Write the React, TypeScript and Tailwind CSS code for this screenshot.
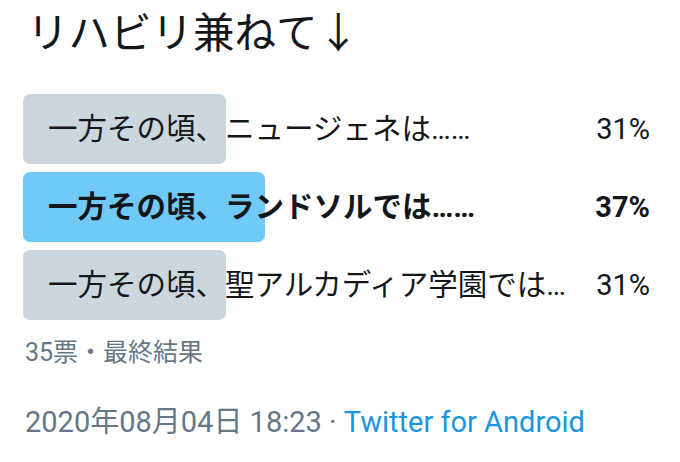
import React from "react";

const font = { fontFamily: 'Roboto, "Noto Sans CJK JP", "Noto Sans", sans-serif' };

function Row({ label, pct, width, win }: { label: string; pct: string; width: number; win?: boolean }) {
  return (
    <div className="relative flex h-[70px] w-[627px] items-center justify-between">
      <div
        className={`absolute left-0 top-0 h-[70px] rounded-[7px] ${win ? "bg-[#71c9f8]" : "bg-[#ccd6dd]"}`}
        style={{ width }}
      />
      <span className={`relative pl-[25px] text-[29.5px] leading-[36px] text-[#14171a] ${win ? "font-bold" : ""}`}>
        {label}
      </span>
      <span className={`relative text-[29px] leading-[36px] text-[#14171a] ${win ? "font-bold" : ""}`}>{pct}</span>
    </div>
  );
}

export default function App() {
  return (
    <div className="h-[462px] w-[680px] overflow-hidden bg-white pl-[23px]" style={font}>
      <div className="pt-[10px] pl-[4px] text-[41.5px] leading-[48px] text-[#14171a]">リハビリ兼ねて↓</div>
      <div className="mt-[36px] flex flex-col gap-[8px]">
        <Row label="一方その頃、ニュージェネは……" pct="31%" width={203} />
        <Row label="一方その頃、ランドソルでは……" pct="37%" width={242} win />
        <Row label="一方その頃、聖アルカディア学園では…" pct="31%" width={203} />
      </div>
      <div className="mt-[17px] pl-[2px] text-[25px] leading-[32px] text-[#657786]">35票・最終結果</div>
      <div className="mt-[34px] pl-[2px] text-[29px] leading-[38px] text-[#657786]">
        2020年08月04日 18:23 · <span className="text-[#1b95e0]">Twitter for Android</span>
      </div>
    </div>
  );
}
